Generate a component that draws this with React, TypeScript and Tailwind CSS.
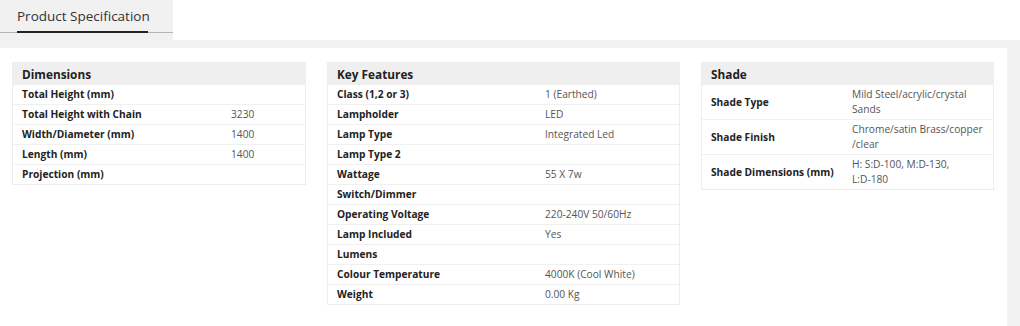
import React from 'react'

type Row = { label: string; value?: React.ReactNode }

const dimensions: Row[] = [
  { label: 'Total Height (mm)' },
  { label: 'Total Height with Chain', value: '3230' },
  { label: 'Width/Diameter (mm)', value: '1400' },
  { label: 'Length (mm)', value: '1400' },
  { label: 'Projection (mm)' },
]

const keyFeatures: Row[] = [
  { label: 'Class (1,2 or 3)', value: '1 (Earthed)' },
  { label: 'Lampholder', value: 'LED' },
  { label: 'Lamp Type', value: 'Integrated Led' },
  { label: 'Lamp Type 2' },
  { label: 'Wattage', value: '55 X 7w' },
  { label: 'Switch/Dimmer' },
  { label: 'Operating Voltage', value: '220-240V 50/60Hz' },
  { label: 'Lamp Included', value: 'Yes' },
  { label: 'Lumens' },
  { label: 'Colour Temperature', value: '4000K (Cool White)' },
  { label: 'Weight', value: '0.00 Kg' },
]

const shade: Row[] = [
  { label: 'Shade Type', value: 'Mild Steel/acrylic/crystal Sands' },
  { label: 'Shade Finish', value: 'Chrome/satin Brass/copper /clear' },
  {
    label: 'Shade Dimensions (mm)',
    value: (
      <>
        H: <span className="whitespace-nowrap">S:D-100,</span> <span className="whitespace-nowrap">M:D-130,</span>{' '}
        <span className="whitespace-nowrap">L:D-180</span>
      </>
    ),
  },
]

function SpecTable({ title, rows, width, labelWidth }: { title: string; rows: Row[]; width: string; labelWidth: string }) {
  return (
    <div className={`${width} shrink-0 border border-[#ededed] bg-white`}>
      <div className="h-[22px] bg-[#efefef] px-[9px] text-[11.8px] font-bold leading-[22px] text-[#222]">{title}</div>
      {rows.map((r) => (
        <div key={r.label} className="flex items-center border-b border-[#f0f0f0] last:border-b-0">
          <div className={`${labelWidth} shrink-0 whitespace-nowrap px-[9px] py-[2px] text-[10.2px] font-bold leading-[15px] text-[#222]`}>
            {r.label}
          </div>
          <div className="min-w-0 flex-1 px-[10px] py-[2px] text-[10.2px] leading-[15px] text-[#555]">{r.value ?? '\u00a0'}</div>
        </div>
      ))}
    </div>
  )
}

export default function App() {
  return (
    <div className="h-[326px] w-[1020px] overflow-hidden bg-[#f2f2f2] font-['Open_Sans',sans-serif]">
      <div className="flex h-[40px] bg-white">
        <div className="relative w-[173px] bg-[#f1f1f1]">
          <div className="pl-[17px] pt-[6px] text-[13.5px] leading-[20px] text-[#333]">Product Specification</div>
          <div className="absolute left-0 top-[32px] h-px w-[173px] bg-[#b5b5b5]" />
          <div className="absolute left-[17px] top-[31px] h-[2px] w-[131px] bg-[#222]" />
        </div>
      </div>
      <div className="mt-[8px] flex h-[278px] w-[1007px] items-start gap-[21px] bg-white pl-[12px] pt-[14px]">
        <SpecTable title="Dimensions" rows={dimensions} width="w-[294px]" labelWidth="w-[208px]" />
        <SpecTable title="Key Features" rows={keyFeatures} width="w-[353px]" labelWidth="w-[207px]" />
        <SpecTable title="Shade" rows={shade} width="w-[293px]" labelWidth="w-[140px]" />
      </div>
    </div>
  )
}
